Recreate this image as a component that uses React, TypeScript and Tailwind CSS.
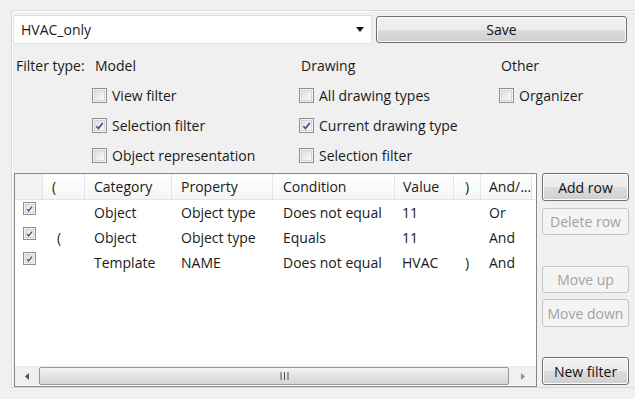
import React from "react";

const font = { fontFamily: '"Open Sans", "Noto Sans", sans-serif' };

function Check({ checked, small }: { checked?: boolean; small?: boolean }) {
  const size = small ? "w-[13px] h-[13px]" : "w-[15px] h-[15px]";
  return (
    <div className={`${size} shrink-0 border border-[#8f8f8f] bg-[#f4f4f4] p-[1px]`}>
      <div className="w-full h-full border border-[#d4d4d4] bg-gradient-to-br from-[#dedede] to-[#fbfbfb] flex items-center justify-center">
        {checked && (
          <svg viewBox="0 0 10 10" className="w-[10px] h-[10px]">
            <path d="M1.5 5.2 L3.8 7.8 L8.6 1.6" fill="none" stroke="#3c4e86" strokeWidth="1.8" />
          </svg>
        )}
      </div>
    </div>
  );
}

function CheckItem({ label, checked }: { label: string; checked?: boolean }) {
  return (
    <div className="flex items-center h-[15px]">
      <Check checked={checked} />
      <span className="ml-[5px] text-[14px] leading-none">{label}</span>
    </div>
  );
}

function Btn({ label, disabled, className = "" }: { label: string; disabled?: boolean; className?: string }) {
  return disabled ? (
    <div className={`flex items-center justify-center rounded-[3px] border border-[#c5c5c5] bg-[#f4f4f4] text-[#a2a2a2] text-[14px] ${className}`}>
      {label}
    </div>
  ) : (
    <div
      className={`flex items-center justify-center rounded-[3px] border border-[#707070] text-[14px] text-[#111] bg-[linear-gradient(#f2f2f2_0%,#ebebeb_50%,#dddddd_51%,#cfcfcf_100%)] shadow-[inset_0_0_0_1px_#fcfcfc] ${className}`}
    >
      {label}
    </div>
  );
}

const cols = [
  { w: 28, h: "" },
  { w: 42, h: "(" },
  { w: 87, h: "Category" },
  { w: 101, h: "Property" },
  { w: 122, h: "Condition" },
  { w: 59, h: "Value" },
  { w: 27, h: ")" },
  { w: 51, h: "And/..." },
];

const headPads = [0, 9, 9, 9, 10, 8, 11, 8];
const rowPads = [14, 9, 9, 10, 7, 11, 8];
const rowHeights = ["h-[25px]", "h-[25px]", "h-[24px]"];

const rows = [
  ["", "Object", "Object type", "Does not equal", "11", "", "Or"],
  ["(", "Object", "Object type", "Equals", "11", "", "And"],
  ["", "Template", "NAME", "Does not equal", "HVAC", ")", "And"],
];

export default function App() {
  return (
    <div className="w-[635px] h-[399px] bg-[#f0f0f0] text-[#1a1a1a] overflow-hidden pl-[11px] pt-[10px]" style={font}>
      <div className="h-[378px] border-l border-t border-b border-[#d9d9d9] rounded-tl-[3px] shadow-[inset_1px_1px_0_#ffffff]">
        {/* top row */}
        <div className="flex mt-[4px] ml-[1px]">
          <div className="w-[359px] h-[29px] bg-white border border-[#e0e0e0] rounded-[2px] flex items-center pl-[7px] pr-[6px]">
            <span className="text-[14px] flex-1">HVAC_only</span>
            <svg width="8" height="5" viewBox="0 0 8 5" className="mr-[1px]">
              <path d="M0 0 H8 L4 5 Z" fill="#111" />
            </svg>
          </div>
          <Btn label="Save" className="w-[251px] h-[27px] mt-[1px] ml-[4px]" />
        </div>

        {/* filter type */}
        <div className="flex mt-[12px] h-[18px] items-center text-[14px]">
          <span className="w-[76px] ml-[4px]">Filter type:</span>
          <span className="w-[207px] pl-[3px]">Model</span>
          <span className="w-[200px] pl-[2px]">Drawing</span>
          <span className="pl-[2px]">Other</span>
        </div>

        <div className="flex mt-[14px] ml-[80px]">
          <div className="w-[207px] flex flex-col gap-[15px]">
            <CheckItem label="View filter" />
            <CheckItem label="Selection filter" checked />
            <CheckItem label="Object representation" />
          </div>
          <div className="w-[200px] flex flex-col gap-[15px]">
            <CheckItem label="All drawing types" />
            <CheckItem label="Current drawing type" checked />
            <CheckItem label="Selection filter" />
          </div>
          <div className="flex flex-col gap-[15px]">
            <CheckItem label="Organizer" />
          </div>
        </div>

        {/* table + buttons */}
        <div className="flex mt-[10px] ml-[2px]">
          <div className="w-[523px] h-[214px] border border-[#828790] bg-white flex flex-col">
            <div className="flex h-[26px] border-b border-[#e4e4e4] bg-white">
              {cols.map((c, i) => (
                <div
                  key={i}
                  className={`h-full flex items-center text-[14px] border-r border-[#e4e4e4] ${i === 0 ? "bg-[#f2f2f2]" : "bg-[linear-gradient(#ffffff,#f5f5f5)]"}`}
                  style={{ width: c.w, paddingLeft: headPads[i] }}
                >
                  {c.h}
                </div>
              ))}
            </div>
            <div className="flex-1 flex flex-col">
              {rows.map((r, ri) => (
                <div key={ri} className={`flex ${rowHeights[ri]} items-center text-[14px]`}>
                  <div className="w-[28px] flex justify-center self-start pt-[2px]">
                    <Check checked small />
                  </div>
                  {r.map((v, ci) => (
                    <div key={ci} style={{ width: cols[ci + 1].w, paddingLeft: rowPads[ci] }}>
                      {v}
                    </div>
                  ))}
                </div>
              ))}
            </div>
            {/* scrollbar */}
            <div className="h-[19px] mb-[1px] flex items-center bg-[#f0f0f0] border-t border-[#e8e8e8]">
              <div className="w-[24px] flex justify-center">
                <svg width="4" height="7" viewBox="0 0 4 7">
                  <path d="M4 0 V7 L0 3.5 Z" fill="#505050" />
                </svg>
              </div>
              <div className="w-[470px] h-[18px] rounded-[2px] border border-[#979797] bg-[linear-gradient(#f4f4f4,#e2e2e2_50%,#d6d6d6)] flex items-center justify-center">
                <svg width="9" height="8" viewBox="0 0 9 8" className="ml-[20px]">
                  <path d="M1 0 V8 M4.5 0 V8 M8 0 V8" stroke="#555" strokeWidth="1" />
                </svg>
              </div>
              <div className="flex-1 flex justify-center">
                <svg width="4" height="7" viewBox="0 0 4 7">
                  <path d="M0 0 V7 L4 3.5 Z" fill="#909090" />
                </svg>
              </div>
            </div>
          </div>

          <div className="ml-[5px] flex flex-col w-[87px]">
            <Btn label="Add row" className="h-[28px] w-[87px]" />
            <Btn label="Delete row" disabled className="h-[27px] w-[87px] mt-[7px]" />
            <Btn label="Move up" disabled className="h-[27px] w-[87px] mt-[31px]" />
            <Btn label="Move down" disabled className="h-[28px] w-[87px] mt-[6px]" />
            <Btn label="New filter" className="h-[28px] w-[87px] mt-[30px]" />
          </div>
        </div>
      </div>
    </div>
  );
}
